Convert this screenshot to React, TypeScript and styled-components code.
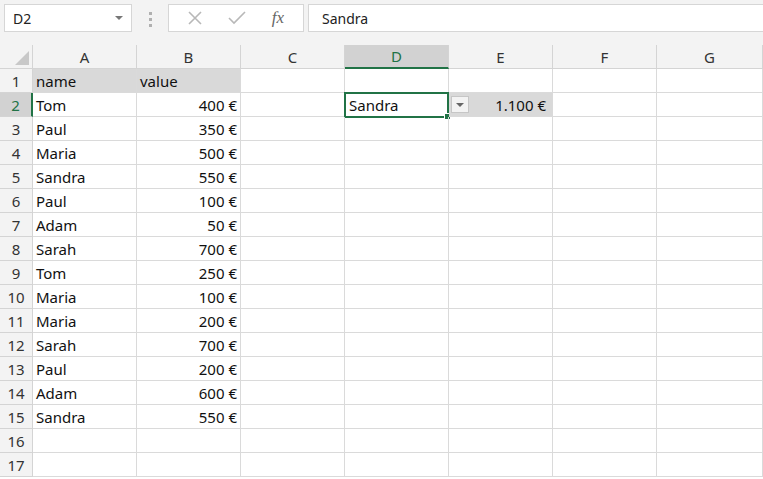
import React from "react";
import styled, { createGlobalStyle, css } from "styled-components";

const G = createGlobalStyle`
  body { margin:0; font-family:"Noto Sans","Open Sans",sans-serif; background:#fff; overflow:hidden; }
`;
const Top = styled.div`
  height:45px; background:#f3f3f3; display:flex; align-items:flex-start; padding-top:4px; box-sizing:border-box;
`;
const NameBox = styled.div`
  margin-left:4px; width:128px; height:28px; box-sizing:border-box; background:#fff; border:1px solid #d6d6d6;
  display:flex; align-items:center; justify-content:space-between; padding:0 8px 0 8px; font-size:14px; color:#222;
`;
const Caret = styled.span`width:0;height:0;border-left:4px solid transparent;border-right:4px solid transparent;border-top:4px solid #777;`;
const Dots = styled.div`width:36px; display:flex; flex-direction:column; align-items:center; gap:3px; padding-top:8px;
  span{width:3px;height:3px;background:#b0b0b0;}`;
const Fx = styled.div`width:136px;height:28px;box-sizing:border-box;background:#fff;border:1px solid #d6d6d6;display:flex;align-items:center;justify-content:space-around;padding:0 6px;color:#b8b8b8;`;
const Formula = styled.div`margin-left:4px;flex:1;height:28px;box-sizing:border-box;background:#fff;border:1px solid #d6d6d6;border-right:none;display:flex;align-items:center;padding-left:13px;font-size:14px;color:#222;`;
const Grid = styled.div`
  display:grid; grid-template-columns:33px repeat(6,104px) 1fr; grid-auto-rows:24px;
`;
const ColHead = styled.div<{ $sel?: boolean }>`
  background:${p => p.$sel ? "#d2d2d2" : "#f3f3f3"}; border-right:1px solid #d4d4d4;
  border-bottom:${p => p.$sel ? "2px solid #217346" : "1px solid #d4d4d4"};
  color:${p => p.$sel ? "#217346" : "#333"}; font-size:15px; display:flex; align-items:center; justify-content:center; box-sizing:border-box;
`;
const Corner = styled.div`background:#f3f3f3;border-right:1px solid #d4d4d4;border-bottom:1px solid #d4d4d4;box-sizing:border-box;position:relative;
  &::after{content:"";position:absolute;right:3px;bottom:3px;border-left:14px solid transparent;border-bottom:14px solid #c8c8c8;}`;
const RowHead = styled.div<{ $sel?: boolean }>`
  background:${p => p.$sel ? "#d2d2d2" : "#f3f3f3"}; border-bottom:1px solid #d4d4d4;
  border-right:${p => p.$sel ? "2px solid #217346" : "1px solid #d4d4d4"};
  color:${p => p.$sel ? "#217346" : "#333"}; font-size:15px; display:flex; align-items:center; justify-content:center; box-sizing:border-box;
`;
const Cell = styled.div<{ $gray?: boolean; $right?: boolean; $sel?: boolean }>`
  box-sizing:border-box; border-right:1px solid #dadada; border-bottom:1px solid #dadada; font-size:15px; color:#111;
  display:flex; align-items:center; padding:0 3px; position:relative; white-space:nowrap;
  justify-content:${p => p.$right ? "flex-end" : "flex-start"};
  ${p => p.$gray && css`background:#d9d9d9;`}
  ${p => p.$sel && css`border:2px solid #217346; margin:-1px 0 -1px -1px; padding-left:3px;
    &::after{content:"";position:absolute;right:-4px;bottom:-4px;width:5px;height:5px;background:#217346;border:1px solid #fff;}`}
`;
const DropBtn = styled.div`position:absolute;left:105px;top:2px;width:18px;height:17px;box-sizing:border-box;border:1px solid #c6c6c6;background:#f3f3f3;display:flex;align-items:center;justify-content:center;z-index:2;`;

const data: [string, string][] = [["Tom","400 €"],["Paul","350 €"],["Maria","500 €"],["Sandra","550 €"],["Paul","100 €"],["Adam","50 €"],["Sarah","700 €"],["Tom","250 €"],["Maria","100 €"],["Maria","200 €"],["Sarah","700 €"],["Paul","200 €"],["Adam","600 €"],["Sandra","550 €"]];

export default function App() {
  const rows = [];
  for (let r = 1; r <= 17; r++) {
    rows.push(<RowHead key={"h"+r} $sel={r===2}>{r}</RowHead>);
    if (r === 1) {
      rows.push(<Cell key="a1" $gray>name</Cell>, <Cell key="b1" $gray>value</Cell>);
    } else if (r <= 15) {
      rows.push(<Cell key={"a"+r}>{data[r-2][0]}</Cell>, <Cell key={"b"+r} $right>{data[r-2][1]}</Cell>);
    } else rows.push(<Cell key={"a"+r} />, <Cell key={"b"+r} />);
    rows.push(<Cell key={"c"+r} />);
    if (r === 2) {
      rows.push(<Cell key="d2" $sel>Sandra<DropBtn><Caret style={{borderTopColor:"#666"}} /></DropBtn></Cell>);
      rows.push(<Cell key="e2" $gray $right style={{paddingRight:6}}>1.100 €</Cell>);
    } else rows.push(<Cell key={"d"+r} />, <Cell key={"e"+r} />);
    rows.push(<Cell key={"f"+r} />, <Cell key={"g"+r} />);
  }
  return (
    <>
      <G />
      <Top>
        <NameBox>D2<Caret /></NameBox>
        <Dots><span /><span /><span /></Dots>
        <Fx>
          <svg width="14" height="14" viewBox="0 0 14 14"><path d="M1 1L13 13M13 1L1 13" stroke="#b8b8b8" strokeWidth="1.6" /></svg>
          <svg width="18" height="14" viewBox="0 0 18 14"><path d="M1 7L6 12L17 1" stroke="#b8b8b8" strokeWidth="1.6" fill="none" /></svg>
          <span style={{fontFamily:"'Liberation Serif',serif",fontStyle:"italic",fontSize:17,color:"#666"}}>fx</span>
        </Fx>
        <Formula>Sandra</Formula>
      </Top>
      <Grid>
        <Corner />
        {["A","B","C","D","E","F","G"].map(c => <ColHead key={c} $sel={c==="D"}>{c}</ColHead>)}
        {rows}
      </Grid>
    </>
  );
}
